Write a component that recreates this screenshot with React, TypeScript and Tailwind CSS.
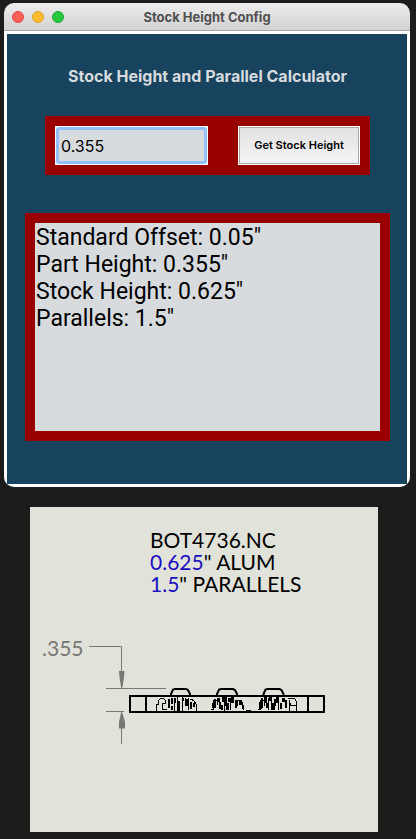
const results = ['Standard Offset: 0.05"', 'Part Height: 0.355"', 'Stock Height: 0.625"', 'Parallels: 1.5"'].join('\n');

function TitleBar() {
  return (
    <header className="grid h-7 grid-cols-[1fr_auto_1fr] items-center border-b border-[#a9a9a9] bg-linear-to-b from-[#ededed] to-[#d2d2d2] px-2">
      <div className="flex gap-2">
        <button type="button" aria-label="Close" className="size-3 rounded-full border border-[#e0443e] bg-[#ff5f57]" />
        <button type="button" aria-label="Minimize" className="size-3 rounded-full border border-[#dea123] bg-[#febc2e]" />
        <button type="button" aria-label="Zoom" className="size-3 rounded-full border border-[#1aab29] bg-[#28c840]" />
      </div>
      <span className="text-[13px] leading-4 font-bold text-[#505050]">Stock Height Config</span>
    </header>
  );
}

function Calculator() {
  return (
    <main className="flex flex-col items-center border-3 border-white bg-[#17435f] pt-8 pr-[17px] pb-[43px] pl-[18px]">
      <h1 className="text-base leading-5 font-bold text-[#d7dbde]">Stock Height and Parallel Calculator</h1>
      <form className="mt-[30px] flex w-[325px] max-w-full justify-between bg-[#990000] p-2.5" onSubmit={(e) => e.preventDefault()}>
        <div className="flex border border-white bg-white">
          <input
            aria-label="Part height"
            defaultValue="0.355"
            className="h-[37px] w-[151px] rounded-[3px] border-3 border-[#93c1f7] bg-[#d7dbde] px-0.5 text-base text-black outline-none"
          />
        </div>
        <div className="flex border border-white">
          <button type="submit" className="h-[37px] w-[120px] border border-[#a6a6a6] bg-linear-to-b from-[#e2e2e2] to-[#f5f5f5] text-[11px] font-semibold text-black">
            Get Stock Height
          </button>
        </div>
      </form>
      <textarea
        aria-label="Results"
        readOnly
        value={results}
        className="mt-[38px] block h-[228px] w-full resize-none border-10 border-[#990000] bg-[#d7dbde] px-px pt-px font-[Roboto,sans-serif] text-[23px] leading-[27px] text-black outline-none"
      />
    </main>
  );
}

function PartDrawing() {
  return (
    <svg viewBox="30 630 348 120" className="block w-full" fill="none" role="img" aria-label="Side view of the part">
      <g stroke="#777773" strokeWidth="1">
        <path d="M89 646.5H121.5V688M106 688.5H166M106 711.5H124M121.5 712V744" />
        <path d="M119 671H124.500L124 677L122.500 687H121L119.500 677ZM121 713H122.500L125 722V728.500H119V722Z" fill="#777773" stroke="none" />
      </g>
      <text x="42" y="656" fontSize="21" fill="#777773" fontFamily="Lato, sans-serif">.355</text>
      <g stroke="#000" strokeWidth="2">
        <path d="M130 696H324V712H130ZM146 696V712M308 696V712" />
        <path d="M171 696V694L173 689.500L175 689H186L188 690L190 694V696M217 696V694L219 689.500L221 689H233L235 690L237 694V696M263.500 696V694L265.500 689.500L267.500 689H279.500L281.500 690L283.500 694V696" />
      </g>
      <g stroke="#000" strokeWidth="1" shapeRendering="crispEdges">
        <path d="M163.500 698.500H160.500L158.500 700.500V704.500H156.500V711M163.500 698.500L165.500 700.500V703.500H162.500V709.500H167M174.500 700V711M177.500 697V711M182.500 697V711M185.500 698V706M188.500 698V710M190.500 699L193.500 700.500L196.500 704.500V711" />
        <path strokeWidth="2" d="M169 699V708M172 698V704M175 698V703M172 706V710M179 701V711M183 698V701M187 699V706M191 702V709M194 703V707" />
        <path d="M210.500 709.500H213.500V700.500H217V705M224.500 699V711M230.500 698V710M237.500 706V700.500H241.500L243.500 706V710M246 710.500H251" />
        <path strokeWidth="3" d="M213 703V708M218 698V702M223 697V702M227 703V710M232 697V703M240 701V705" />
        <path strokeWidth="2" d="M215 699V708M220 702V709M226 697V706M229 698V702M222 705V710M236 700V708M243 705V709" />
        <path d="M257.500 709.500H260.500V700.500H264V706M268.500 698V710M271.500 697V710M278.500 698V710M289.500 700V711M288 698.500H294.500L296.500 701.500V711M291 705.500H296" />
        <path strokeWidth="3" d="M260 702V709M265 697V703M270 697V701M273 703V710M277 697V703M283 698V702" />
        <path strokeWidth="2" d="M262 698V708M267 703V708M275 699V706M281 703V709M286 700V708M290 703V706" />
      </g>
    </svg>
  );
}

export default function App() {
  return (
    <div className="min-h-screen bg-[#1c1c1c] pt-[3px] pr-1.5 pb-[7px] pl-1 font-[Inter,sans-serif]">
      <section className="overflow-hidden rounded-[10px]">
        <TitleBar />
        <Calculator />
      </section>
      <section className="mt-5 mr-8 ml-[26px] h-[325px] bg-[#e1e2da]">
        <div className="h-[123px] pt-[22px] pl-[120px] font-[Lato,sans-serif] text-[21px] leading-[22px] text-black">
          <p>BOT4736.NC</p>
          <p><span className="text-[#1a10c0]">0.625</span>" ALUM</p>
          <p><span className="text-[#1a10c0]">1.5</span>" PARALLELS</p>
        </div>
        <PartDrawing />
      </section>
    </div>
  );
}
